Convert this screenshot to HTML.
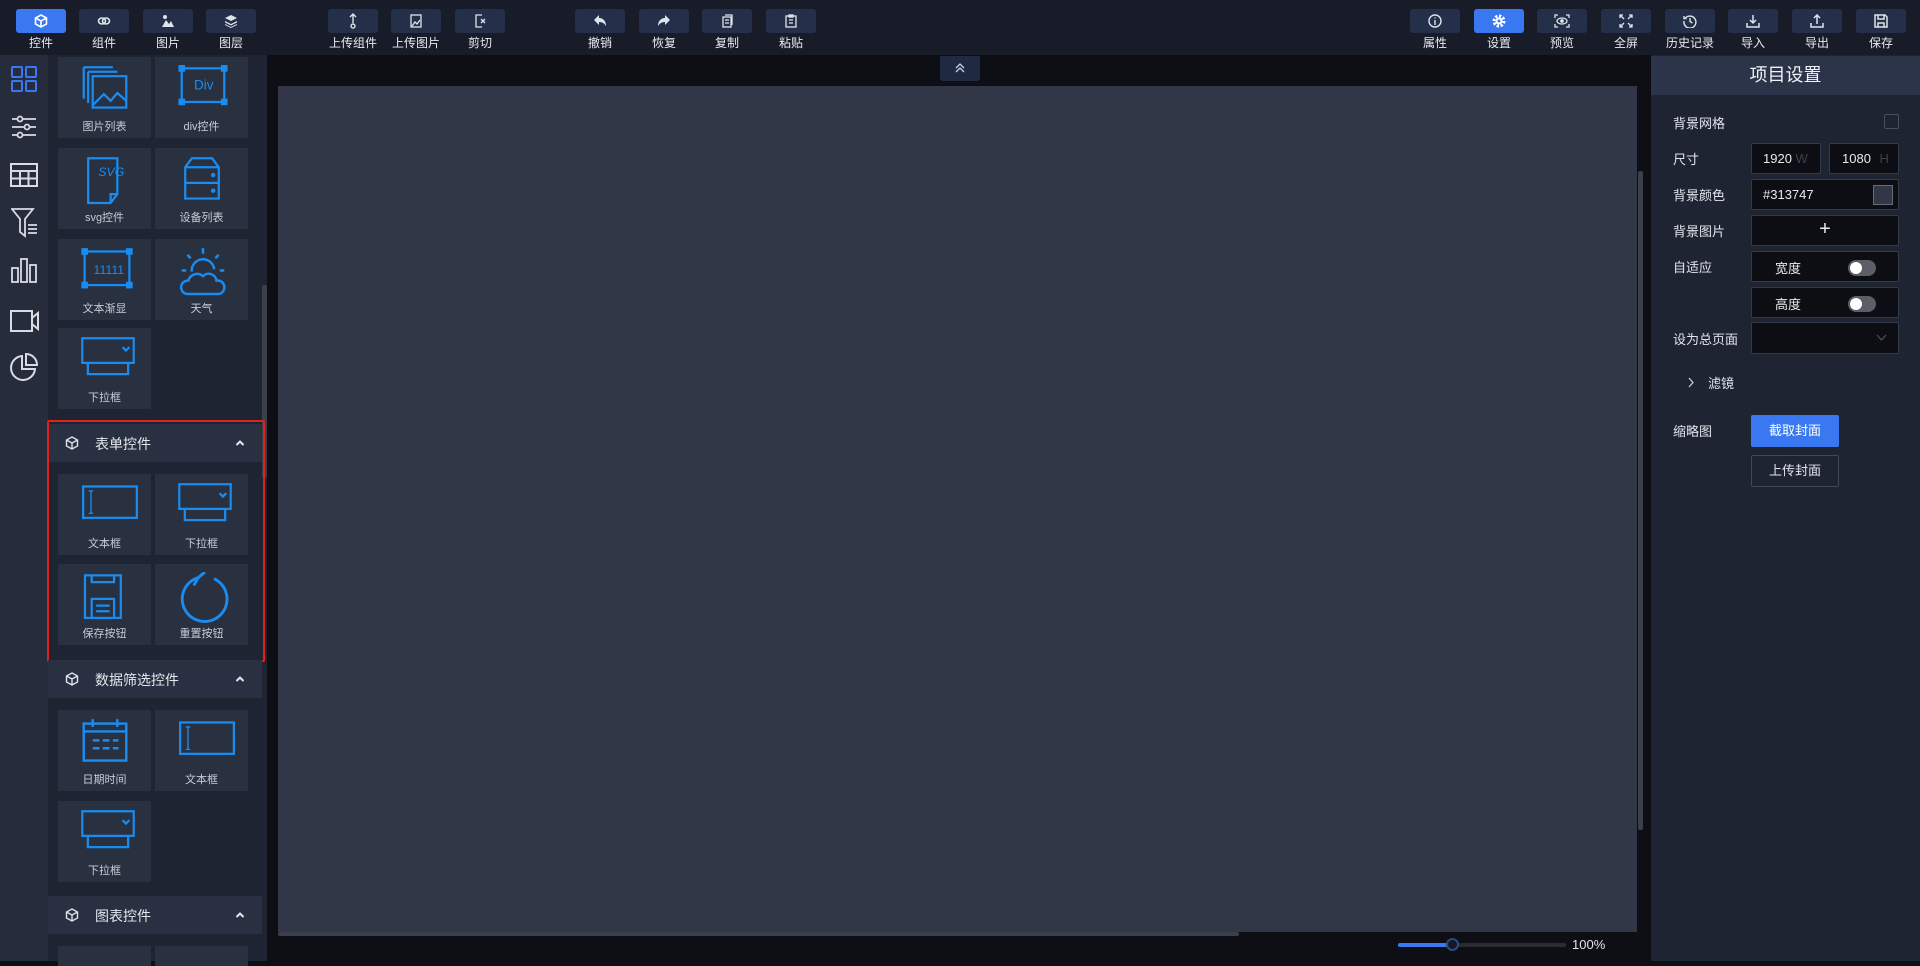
<!DOCTYPE html>
<html><head><meta charset="utf-8"><style>
*{margin:0;padding:0;box-sizing:border-box}
body{width:1920px;height:961px;overflow:hidden;background:#0d0f14;font-family:"Liberation Sans","Noto Sans CJK SC",sans-serif;color:#e6e8ee;position:relative}
.abs{position:absolute}
#top{left:0;top:0;width:1920px;height:55px;background:#181c28}
.tb{position:absolute;top:9px;width:50px;height:24px;background:#243049;border-radius:3px;display:flex;align-items:center;justify-content:center}
.tb.on{background:#3a78f2}
.tl{position:absolute;top:34px;width:70px;text-align:center;font-size:12px;color:#e8eaf0}
#rail{left:0;top:55px;width:48px;height:906px;background:#262c3b}
#panel{left:48px;top:55px;width:219px;height:906px;background:#1f2433}
.tile{position:absolute;width:93px;height:81px;background:#293040}
.tile svg{position:absolute;left:26px;top:8px;transform:scale(1.12);transform-origin:50% 0}
.tile span{position:absolute;left:0;right:0;bottom:4px;text-align:center;font-size:11px;color:#c8ccd4}
.sh{position:absolute;left:48px;width:214px;height:38px;background:#293042;font-size:14px;color:#e6e8ee}
.sh .t{position:absolute;left:47px;top:10px}
.sh .c{position:absolute;right:17px;top:15px}
#right{left:1651px;top:55px;width:269px;height:906px;background:#1f2433}
.lab{position:absolute;left:22px;font-size:13px;color:#e2e5ec}
.inp{position:absolute;background:#0c0e13;border:1px solid #343a48;border-radius:2px;font-size:13px;color:#e8eaf0}
.tog{position:absolute;right:22px;top:8px;width:28px;height:16px;border-radius:8px;background:#5b5e66}
.tog:after{content:"";position:absolute;left:2px;top:2px;width:12px;height:12px;border-radius:6px;background:#fff}
</style></head><body>
<div id="top" class="abs">
 <div class="tb on" style="left:16px"><svg width="14" height="14" viewBox="0 0 14 14" fill="none" stroke="#fff" stroke-width="1.6"><path d="M7 1L12.5 4V10L7 13L1.5 10V4Z M1.5 4L7 7L12.5 4 M7 7V13"/></svg></div><div class="tl" style="left:6px">控件</div>
 <div class="tb" style="left:79px"><svg width="14" height="10" viewBox="0 0 14 10" fill="none" stroke="#dfe3ea" stroke-width="1.6"><ellipse cx="5" cy="5" rx="3.5" ry="3"/><ellipse cx="9" cy="5" rx="3.5" ry="3"/></svg></div><div class="tl" style="left:69px">组件</div>
 <div class="tb" style="left:143px"><svg width="14" height="14" viewBox="0 0 14 14" fill="#dfe3ea"><circle cx="4" cy="3" r="2"/><path d="M1 13L5 6L8 10L10 7L13 13Z"/></svg></div><div class="tl" style="left:133px">图片</div>
 <div class="tb" style="left:206px"><svg width="14" height="14" viewBox="0 0 14 14" fill="#dfe3ea"><path d="M7 1L13 4L7 7L1 4Z"/><path d="M1 7L7 10L13 7V8.5L7 11.5L1 8.5Z"/><path d="M1 10L7 13L13 10V11L7 14L1 11Z"/></svg></div><div class="tl" style="left:196px">图层</div>
 <div class="tb" style="left:328px"><svg width="12" height="16" viewBox="0 0 12 16" fill="none" stroke="#dfe3ea" stroke-width="1.4"><path d="M6 1V10M3 4L6 1L9 4"/><circle cx="6" cy="13" r="2"/></svg></div><div class="tl" style="left:318px">上传组件</div>
 <div class="tb" style="left:391px"><svg width="14" height="14" viewBox="0 0 14 14" fill="none" stroke="#dfe3ea" stroke-width="1.3"><rect x="2" y="1" width="10" height="12"/><path d="M3 12L6 8L8 10L11 6"/></svg></div><div class="tl" style="left:381px">上传图片</div>
 <div class="tb" style="left:455px"><svg width="14" height="14" viewBox="0 0 14 14" fill="none" stroke="#dfe3ea" stroke-width="1.3"><path d="M9 1H3V13H9"/><path d="M8 5L12 9M12 5L8 9"/></svg></div><div class="tl" style="left:445px">剪切</div>
 <div class="tb" style="left:575px"><svg width="14" height="12" viewBox="0 0 14 12" fill="#dfe3ea"><path d="M1 5L6 0V3C10 3 13 6 13 11C11 8 9 7 6 7V10Z"/></svg></div><div class="tl" style="left:565px">撤销</div>
 <div class="tb" style="left:639px"><svg width="14" height="12" viewBox="0 0 14 12" fill="#dfe3ea"><path d="M13 5L8 0V3C4 3 1 6 1 11C3 8 5 7 8 7V10Z"/></svg></div><div class="tl" style="left:629px">恢复</div>
 <div class="tb" style="left:702px"><svg width="12" height="14" viewBox="0 0 12 14" fill="none" stroke="#dfe3ea" stroke-width="1.3"><rect x="2" y="3" width="8" height="10"/><path d="M4 1H11V11M4 6H8M4 9H8"/></svg></div><div class="tl" style="left:692px">复制</div>
 <div class="tb" style="left:766px"><svg width="12" height="14" viewBox="0 0 12 14" fill="none" stroke="#dfe3ea" stroke-width="1.3"><rect x="1" y="2" width="10" height="11"/><rect x="4" y="1" width="4" height="2"/><path d="M4 6H8M4 9H8"/></svg></div><div class="tl" style="left:756px">粘贴</div>
 <div class="tb" style="left:1410px"><svg width="14" height="14" viewBox="0 0 14 14" fill="none" stroke="#dfe3ea" stroke-width="1.4"><circle cx="7" cy="7" r="6"/><path d="M7 6V11M7 3.5V4.5"/></svg></div><div class="tl" style="left:1400px">属性</div>
 <div class="tb on" style="left:1474px"><svg width="14" height="14" viewBox="0 0 14 14"><circle cx="7" cy="7" r="5" fill="none" stroke="#fff" stroke-width="3" stroke-dasharray="2.3 1.6"/><circle cx="7" cy="7" r="3.5" fill="#fff"/><circle cx="7" cy="7" r="1.5" fill="#3a78f2"/></svg></div><div class="tl" style="left:1464px">设置</div>
 <div class="tb" style="left:1537px"><svg width="16" height="14" viewBox="0 0 16 14" fill="none" stroke="#dfe3ea" stroke-width="1.3"><path d="M1 4V1H4M12 1H15V4M15 10V13H12M4 13H1V10"/><ellipse cx="8" cy="7" rx="5" ry="3"/><circle cx="8" cy="7" r="1.2" fill="#dfe3ea"/></svg></div><div class="tl" style="left:1527px">预览</div>
 <div class="tb" style="left:1601px"><svg width="14" height="14" viewBox="0 0 14 14" fill="none" stroke="#dfe3ea" stroke-width="1.3"><path d="M1 4V1H4M1 1L5 5M10 1H13V4M13 1L9 5M13 10V13H10M13 13L9 9M4 13H1V10M1 13L5 9"/></svg></div><div class="tl" style="left:1591px">全屏</div>
 <div class="tb" style="left:1665px"><svg width="14" height="14" viewBox="0 0 14 14" fill="none" stroke="#dfe3ea" stroke-width="1.4"><path d="M2.5 4A6 6 0 1 1 1 7M1 2V4.5H3.5M7 4V7.5L9.5 9"/></svg></div><div class="tl" style="left:1655px">历史记录</div>
 <div class="tb" style="left:1728px"><svg width="14" height="14" viewBox="0 0 14 14" fill="none" stroke="#dfe3ea" stroke-width="1.5"><path d="M7 1V9M4 6L7 9L10 6M1 9V13H13V9"/></svg></div><div class="tl" style="left:1718px">导入</div>
 <div class="tb" style="left:1792px"><svg width="14" height="14" viewBox="0 0 14 14" fill="none" stroke="#dfe3ea" stroke-width="1.5"><path d="M7 10V1M4 4L7 1L10 4M1 9V13H13V9"/></svg></div><div class="tl" style="left:1782px">导出</div>
 <div class="tb" style="left:1856px"><svg width="14" height="14" viewBox="0 0 14 14" fill="none" stroke="#dfe3ea" stroke-width="1.5"><path d="M1 1H11L13 3V13H1Z M4 1V5H10V1 M4 13V9H10V13"/></svg></div><div class="tl" style="left:1846px">保存</div>
</div>

<div id="rail" class="abs">
 <svg class="abs" style="left:11px;top:11px" width="26" height="26" viewBox="0 0 26 26" fill="none" stroke="#3a78f2" stroke-width="2"><rect x="1" y="1" width="10" height="10" rx="1"/><rect x="15" y="1" width="10" height="10" rx="1"/><rect x="1" y="15" width="10" height="10" rx="1"/><rect x="15" y="15" width="10" height="10" rx="1"/></svg>
 <svg class="abs" style="left:11px;top:60px" width="26" height="24" viewBox="0 0 26 24" fill="none" stroke="#d8dbe2" stroke-width="1.8"><path d="M1 4H25M1 12H25M1 20H25"/><circle cx="9" cy="4" r="2.5" fill="#262c3b"/><circle cx="16" cy="12" r="2.5" fill="#262c3b"/><circle cx="9" cy="20" r="2.5" fill="#262c3b"/></svg>
 <svg class="abs" style="left:10px;top:108px" width="28" height="24" viewBox="0 0 28 24" fill="none" stroke="#d8dbe2" stroke-width="2"><rect x="1" y="1" width="26" height="22"/><path d="M1 8H27M1 15.5H27M10 8V23M18.5 8V23"/></svg>
 <svg class="abs" style="left:11px;top:153px" width="28" height="30" viewBox="0 0 28 30" fill="none" stroke="#d8dbe2" stroke-width="1.8"><path d="M1 1H22L14 11V28L9 24V11Z M17 17H26M17 21H26M17 25H26"/></svg>
 <svg class="abs" style="left:11px;top:202px" width="26" height="26" viewBox="0 0 26 26" fill="none" stroke="#d8dbe2" stroke-width="1.8"><rect x="1" y="11" width="6" height="14"/><rect x="10" y="2" width="6" height="23"/><rect x="19" y="8" width="6" height="17"/></svg>
 <svg class="abs" style="left:10px;top:255px" width="30" height="22" viewBox="0 0 30 22" fill="none" stroke="#d8dbe2" stroke-width="2"><rect x="1" y="1" width="21" height="20"/><path d="M22 8L28 3V19L22 14"/></svg>
 <svg class="abs" style="left:10px;top:298px" width="28" height="28" viewBox="0 0 28 28" fill="none" stroke="#d8dbe2" stroke-width="2"><path d="M12 3A12 12 0 1 0 25 16H12Z M16 1V12H27A11 11 0 0 0 16 1Z"/></svg>
</div>

<div id="panel" class="abs"></div>
<div class="abs" style="left:262px;top:285px;width:5px;height:193px;background:#3a3f4c;border-radius:2px"></div>

<div class="tile" style="left:58px;top:57px;height:81px"><svg width="42" height="40" viewBox="0 0 42 40" fill="none" stroke="#1a8cf0" stroke-width="2"><path d="M2 2H28M2 2V30 M6 6H32M6 6V34"/><rect x="10" y="10" width="30" height="28"/><path d="M10 36L20 26L26 32L32 25L40 32"/></svg><span>图片列表</span></div>
<div class="tile" style="left:155px;top:57px;height:81px"><svg width="44" height="36" viewBox="0 0 44 36" fill="none" stroke="#1a8cf0" stroke-width="2"><rect x="3" y="3" width="38" height="30"/><rect x="1" y="1" width="4" height="4" fill="#1a8cf0"/><rect x="39" y="1" width="4" height="4" fill="#1a8cf0"/><rect x="1" y="31" width="4" height="4" fill="#1a8cf0"/><rect x="39" y="31" width="4" height="4" fill="#1a8cf0"/><text x="14" y="22" font-size="12" fill="#1a8cf0" stroke="none" font-family="Liberation Sans">Div</text></svg><span>div控件</span></div>
<div class="tile" style="left:58px;top:148px"><svg width="42" height="44" viewBox="0 0 42 44" fill="none" stroke="#1a8cf0" stroke-width="2"><path d="M6 2H32V34L26 42H6Z M26 42V34H32"/><text x="15" y="18" font-size="11" font-style="italic" fill="#1a8cf0" stroke="none" font-family="Liberation Sans">SVG</text></svg><span>svg控件</span></div>
<div class="tile" style="left:155px;top:148px"><svg width="42" height="44" viewBox="0 0 42 44" fill="none" stroke="#1a8cf0" stroke-width="2"><path d="M6 10L12 2H30L36 10V38H6Z M6 10H36M6 24H36"/><circle cx="31" cy="17" r="1" fill="#1a8cf0"/><circle cx="31" cy="31" r="1" fill="#1a8cf0"/></svg><span>设备列表</span></div>
<div class="tile" style="left:58px;top:239px"><svg width="46" height="38" viewBox="0 0 46 38" fill="none" stroke="#1a8cf0" stroke-width="2"><rect x="3" y="4" width="40" height="30"/><rect x="1" y="2" width="4" height="4" fill="#1a8cf0"/><rect x="41" y="2" width="4" height="4" fill="#1a8cf0"/><rect x="1" y="32" width="4" height="4" fill="#1a8cf0"/><rect x="41" y="32" width="4" height="4" fill="#1a8cf0"/><text x="11" y="24" font-size="11" fill="#1a8cf0" stroke="none" font-family="Liberation Sans">11111</text></svg><span>文本渐显</span></div>
<div class="tile" style="left:155px;top:239px"><svg width="44" height="44" viewBox="0 0 44 44" fill="none" stroke="#1a8cf0" stroke-width="2.2"><path d="M22 1V6M8 7L11 10M36 7L33 10M3 21H7M37 21H41"/><path d="M12 22A10 10 0 0 1 32 20"/><path d="M8 42A6 6 0 0 1 9 30A8 8 0 0 1 22 26A7 7 0 0 1 34 30A6 6 0 0 1 36 42Z"/></svg><span>天气</span></div>
<div class="tile" style="left:58px;top:328px"><svg width="48" height="38" viewBox="0 0 48 38" fill="none" stroke="#1a8cf0" stroke-width="2"><rect x="1" y="2" width="46" height="22"/><path d="M6 24V34H42V24M37 10L40 13L43 10"/></svg><span>下拉框</span></div>

<div class="sh" style="top:424px"><svg class="abs" style="left:17px;top:12px" width="14" height="14" viewBox="0 0 14 14" fill="none" stroke="#dfe3ea" stroke-width="1.4"><path d="M7 1L12.5 4V10L7 13L1.5 10V4Z M1.5 4L7 7L12.5 4 M7 7V13"/></svg><span class="t">表单控件</span><svg class="c" width="10" height="7" viewBox="0 0 10 7" fill="none" stroke="#e6e8ee" stroke-width="2"><path d="M1.5 6L5 2.5L8.5 6"/></svg></div>
<div class="tile" style="left:58px;top:474px"><svg width="52" height="34" viewBox="0 0 52 34" fill="none" stroke="#1a8cf0" stroke-width="2"><rect x="2" y="4" width="48" height="28"/><path d="M9 8V28M7 8H11M7 28H11" stroke-width="1.2"/></svg><span>文本框</span></div>
<div class="tile" style="left:155px;top:474px"><svg width="48" height="38" viewBox="0 0 48 38" fill="none" stroke="#1a8cf0" stroke-width="2"><rect x="1" y="2" width="46" height="22"/><path d="M6 24V34H42V24M37 10L40 13L43 10"/></svg><span>下拉框</span></div>
<div class="tile" style="left:58px;top:564px"><svg width="40" height="44" viewBox="0 0 40 44" fill="none" stroke="#1a8cf0" stroke-width="2"><rect x="3" y="3" width="32" height="38"/><path d="M9 3V9H29V3M9 41V24H29V41M13 30H25M13 35H25"/></svg><span>保存按钮</span></div>
<div class="tile" style="left:155px;top:564px"><svg width="48" height="48" viewBox="0 0 48 48" fill="none" stroke="#1a8cf0" stroke-width="2.6"><path d="M32 6A20 20 0 1 1 18 5M18 5L14 12M18 5L24 0"/></svg><span>重置按钮</span></div>
<div class="abs" style="left:47px;top:420px;width:218px;height:242px;border:2px solid #e0201c;border-radius:2px"></div>

<div class="sh" style="top:660px"><svg class="abs" style="left:17px;top:12px" width="14" height="14" viewBox="0 0 14 14" fill="none" stroke="#dfe3ea" stroke-width="1.4"><path d="M7 1L12.5 4V10L7 13L1.5 10V4Z M1.5 4L7 7L12.5 4 M7 7V13"/></svg><span class="t">数据筛选控件</span><svg class="c" width="10" height="7" viewBox="0 0 10 7" fill="none" stroke="#e6e8ee" stroke-width="2"><path d="M1.5 6L5 2.5L8.5 6"/></svg></div>
<div class="tile" style="left:58px;top:710px"><svg width="42" height="40" viewBox="0 0 42 40" fill="none" stroke="#1a8cf0" stroke-width="2.2"><rect x="2" y="5" width="38" height="33"/><path d="M2 12H40M10 1V8M32 1V8M10 20H16M19 20H25M28 20H33M10 27H16M19 27H25M28 27H33"/></svg><span>日期时间</span></div>
<div class="tile" style="left:155px;top:710px"><svg width="52" height="34" viewBox="0 0 52 34" fill="none" stroke="#1a8cf0" stroke-width="2"><rect x="2" y="4" width="48" height="28"/><path d="M9 8V28M7 8H11M7 28H11" stroke-width="1.2"/></svg><span>文本框</span></div>
<div class="tile" style="left:58px;top:801px"><svg width="48" height="38" viewBox="0 0 48 38" fill="none" stroke="#1a8cf0" stroke-width="2"><rect x="1" y="2" width="46" height="22"/><path d="M6 24V34H42V24M37 10L40 13L43 10"/></svg><span>下拉框</span></div>

<div class="sh" style="top:896px"><svg class="abs" style="left:17px;top:12px" width="14" height="14" viewBox="0 0 14 14" fill="none" stroke="#dfe3ea" stroke-width="1.4"><path d="M7 1L12.5 4V10L7 13L1.5 10V4Z M1.5 4L7 7L12.5 4 M7 7V13"/></svg><span class="t">图表控件</span><svg class="c" width="10" height="7" viewBox="0 0 10 7" fill="none" stroke="#e6e8ee" stroke-width="2"><path d="M1.5 6L5 2.5L8.5 6"/></svg></div>
<div class="tile" style="left:58px;top:946px;height:20px"></div>
<div class="tile" style="left:155px;top:946px;height:20px"></div>

<div class="abs" style="left:940px;top:56px;width:40px;height:25px;background:#1f2a40;border-radius:0 0 3px 3px;text-align:center"><svg width="12" height="12" viewBox="0 0 12 12" fill="none" stroke="#c9d3e6" stroke-width="1.3" style="margin-top:6px"><path d="M2 6L6 2L10 6M2 10L6 6L10 10"/></svg></div>
<div class="abs" style="left:278px;top:86px;width:1359px;height:846px;background:#313747"></div>
<div class="abs" style="left:278px;top:932px;width:961px;height:4px;background:#3a3f4a;border-radius:2px"></div>
<div class="abs" style="left:1638px;top:171px;width:5px;height:659px;background:#3a3f4a;border-radius:2px"></div>
<div class="abs" style="left:1398px;top:943px;width:168px;height:4px;background:#2a2c32;border-radius:2px"></div>
<div class="abs" style="left:1398px;top:943px;width:55px;height:4px;background:#3a78f2;border-radius:2px"></div>
<div class="abs" style="left:1446px;top:938px;width:13px;height:13px;background:#151820;border:2px solid #2d4a80;border-radius:50%"></div>
<div class="abs" style="left:1572px;top:937px;font-size:13px;color:#e2e5ec">100%</div>

<div id="right" class="abs">
 <div class="abs" style="left:0;top:1px;width:269px;height:39px;background:#2b3449;text-align:center;font-size:18px;line-height:39px;color:#f0f2f6">项目设置</div>
 <div class="lab" style="top:58px">背景网格</div>
 <div class="abs" style="left:233px;top:59px;width:15px;height:15px;border:1px solid #4a4f5c;border-radius:2px"></div>
 <div class="lab" style="top:94px">尺寸</div>
 <div class="inp" style="left:100px;top:88px;width:70px;height:31px;padding:7px 0 0 11px">1920 <span style="color:#3c414c">W</span></div>
 <div class="inp" style="left:178px;top:88px;width:70px;height:31px;padding:7px 0 0 12px">1080 <span style="color:#3c414c;margin-left:5px">H</span></div>
 <div class="lab" style="top:130px">背景颜色</div>
 <div class="inp" style="left:100px;top:124px;width:148px;height:31px;padding:7px 0 0 11px">#313747<div class="abs" style="right:5px;top:5px;width:20px;height:20px;background:#313747;border:1px solid #666b76"></div></div>
 <div class="lab" style="top:166px">背景图片</div>
 <div class="inp" style="left:100px;top:160px;width:148px;height:31px;text-align:center;font-size:20px;line-height:27px;font-weight:300">+</div>
 <div class="lab" style="top:202px">自适应</div>
 <div class="inp" style="left:100px;top:196px;width:148px;height:31px;padding:6px 0 0 23px">宽度<div class="tog"></div></div>
 <div class="inp" style="left:100px;top:232px;width:148px;height:31px;padding:6px 0 0 23px">高度<div class="tog"></div></div>
 <div class="lab" style="top:274px">设为总页面</div>
 <div class="inp" style="left:100px;top:267px;width:148px;height:32px"><svg class="abs" style="right:11px;top:11px" width="11" height="8" viewBox="0 0 11 8" fill="none" stroke="#4a4f5c" stroke-width="1.2"><path d="M1 1L5.5 6L10 1"/></svg></div>
 <svg class="abs" style="left:36px;top:322px" width="8" height="11" viewBox="0 0 8 11" fill="none" stroke="#c8ccd4" stroke-width="1.3"><path d="M2 1L6 5.5L2 10"/></svg>
 <div class="abs" style="left:57px;top:318px;font-size:13px;color:#e2e5ec">滤镜</div>
 <div class="lab" style="top:366px">缩略图</div>
 <div class="abs" style="left:100px;top:360px;width:88px;height:32px;background:#3a78f2;border-radius:2px;text-align:center;line-height:32px;font-size:13px;color:#fff">截取封面</div>
 <div class="abs" style="left:100px;top:400px;width:88px;height:32px;border:1px solid #434856;border-radius:2px;text-align:center;line-height:30px;font-size:13px;color:#e2e5ec">上传封面</div>
</div>
</body></html>
